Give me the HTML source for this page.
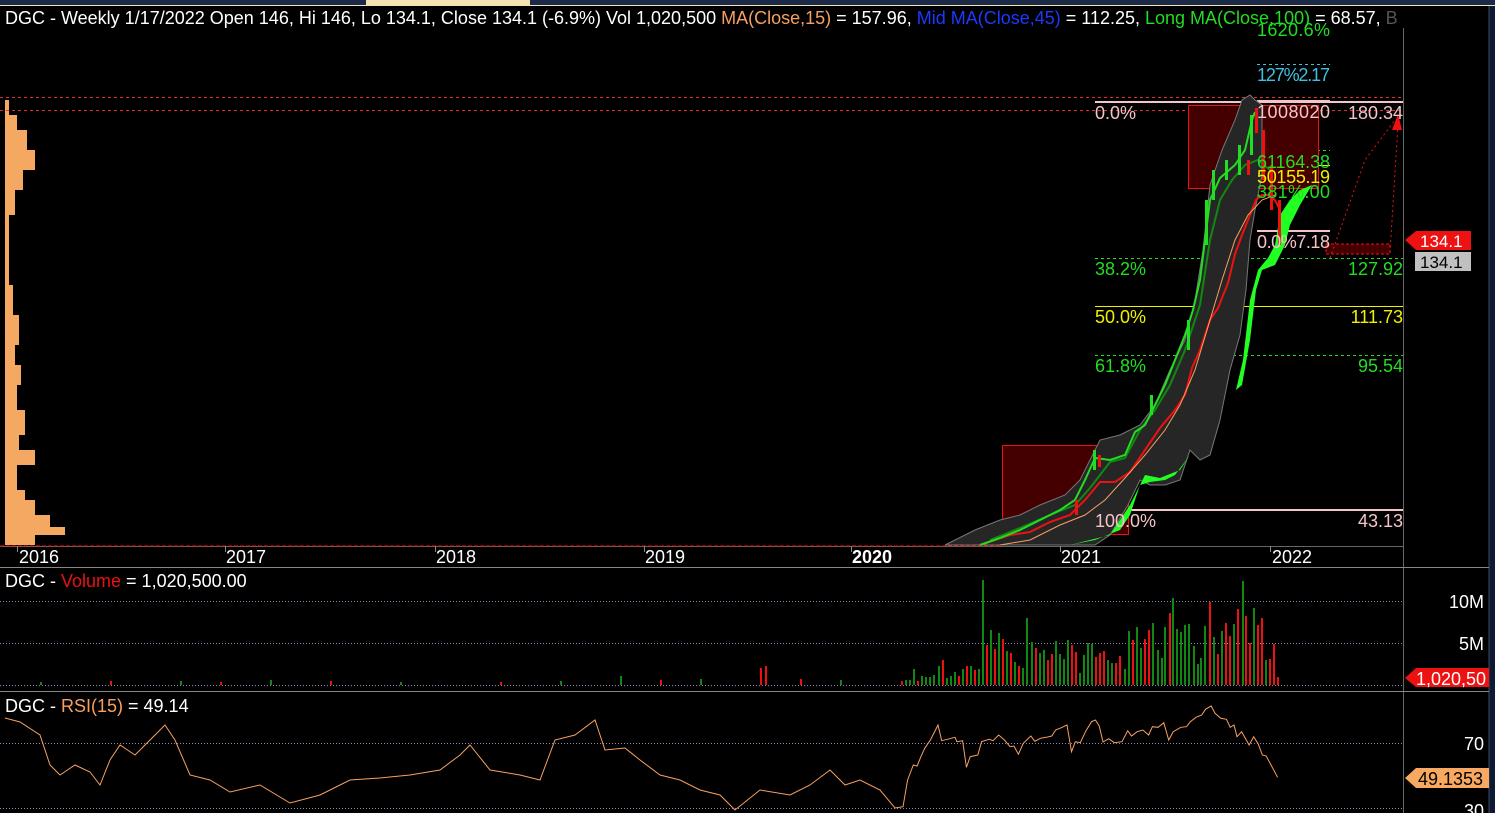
<!DOCTYPE html>
<html><head><meta charset="utf-8"><style>
html,body{margin:0;padding:0;background:#000;width:1495px;height:813px;overflow:hidden}
svg{display:block;font-family:"Liberation Sans",Arial,sans-serif}
</style></head><body>
<svg width="1495" height="813" viewBox="0 0 1495 813" xmlns="http://www.w3.org/2000/svg">
<rect width="1495" height="813" fill="#000"/>
<rect x="0" y="0" width="1495" height="5" fill="#1c2a4a"/>
<rect x="366" y="0" width="164" height="5" fill="#f4e3b0"/>
<rect x="0" y="5" width="1495" height="1" fill="#f4e3b0"/>
<rect x="1489" y="6" width="6" height="807" fill="#0e1a33"/>
<line x1="1489" y1="6" x2="1489" y2="813" stroke="#3a4a6a"/>
<line x1="1403.5" y1="28" x2="1403.5" y2="813" stroke="#666"/>
<line x1="0" y1="567.5" x2="1489" y2="567.5" stroke="#888"/>
<line x1="0" y1="691.5" x2="1489" y2="691.5" stroke="#888"/>
<line x1="0" y1="546.5" x2="1403" y2="546.5" stroke="#666"/>

<g fill="#f4a862">
<rect x="5" y="100" width="4" height="445"/>
<rect x="5" y="115" width="12" height="30"/><rect x="5" y="130" width="22" height="20"/><rect x="5" y="150" width="30" height="20"/><rect x="5" y="170" width="18" height="20"/><rect x="5" y="190" width="10" height="25"/>
<rect x="5" y="285" width="8" height="30"/><rect x="5" y="315" width="14" height="30"/><rect x="5" y="345" width="10" height="20"/><rect x="5" y="365" width="16" height="20"/><rect x="5" y="385" width="12" height="30"/><rect x="5" y="410" width="20" height="25"/><rect x="5" y="435" width="14" height="20"/><rect x="5" y="450" width="30" height="15"/><rect x="5" y="465" width="12" height="25"/><rect x="5" y="490" width="20" height="10"/><rect x="5" y="500" width="30" height="15"/><rect x="5" y="515" width="45" height="12"/><rect x="5" y="527" width="60" height="8"/><rect x="5" y="535" width="30" height="10"/>
</g>

<line x1="0" y1="97.5" x2="1403" y2="97.5" stroke="#e03030" stroke-dasharray="3,3"/>
<line x1="0" y1="110.5" x2="1403" y2="110.5" stroke="#e03030" stroke-dasharray="3,3"/>
<line x1="1095" y1="102" x2="1403" y2="102" stroke="#f4c4c8" stroke-width="2"/>
<line x1="1095" y1="258.5" x2="1403" y2="258.5" stroke="#22dd22" stroke-dasharray="3,3"/>
<line x1="1095" y1="306.5" x2="1403" y2="306.5" stroke="#f0f000"/>
<line x1="1095" y1="355.5" x2="1403" y2="355.5" stroke="#22dd22" stroke-dasharray="3,3"/>
<line x1="1095" y1="510" x2="1403" y2="510" stroke="#f4c4c8" stroke-width="2"/>
<line x1="1257" y1="64.5" x2="1330" y2="64.5" stroke="#40c0e0" stroke-dasharray="3,3"/>
<line x1="1257" y1="101" x2="1330" y2="101" stroke="#f4c4c8" stroke-width="2"/>
<line x1="1257" y1="150.5" x2="1330" y2="150.5" stroke="#22dd22" stroke-dasharray="3,3"/>
<line x1="1257" y1="165.5" x2="1330" y2="165.5" stroke="#f0f000"/>
<line x1="1257" y1="231" x2="1330" y2="231" stroke="#f4c4c8" stroke-width="2"/>

<rect x="1002.5" y="445.5" width="126" height="89" fill="#440000" stroke="#ee1111"/>
<rect x="1188.5" y="105.5" width="130" height="83" fill="#440000" stroke="#ee1111"/>
<rect x="1326" y="244" width="64" height="10" fill="#440000" stroke="#ee1111" stroke-dasharray="3,2"/>

<path d="M945,545 L975,530 L1000,520 L1020,515 L1040,505 L1065,495 L1080,480 L1100,440 L1120,435 L1140,425 L1155,405 L1170,370 L1185,340 L1195,300 L1203,250 L1210,185 L1222,150 L1235,120 L1242,100 L1250,95 L1255,100 L1262,105 L1262,175 L1255,210 L1250,240 L1246,290 L1240,335 L1230,370 L1220,420 L1210,455 L1200,460 L1190,450 L1180,480 L1165,485 L1150,485 L1140,480 L1128,505 L1110,535 L1095,545 Z" fill="#262626" stroke="#777" stroke-width="1"/>
<path d="M1070,545 L1095,540 L1120,530 L1130,515 L1140,485 L1150,482 L1165,480 L1175,475 L1190,455 L1180,470 L1160,478 L1145,475 L1130,505 L1110,535 Z" fill="#22ff22"/>
<path d="M1236,390 L1243,360 L1250,300 L1258,270 L1268,258 L1275,245 L1280,215 L1290,200 L1300,190 L1312,185 L1300,205 L1290,225 L1285,245 L1275,265 L1262,270 L1256,290 L1250,340 L1242,385 Z" fill="#22ff22"/>

<polyline fill="none" stroke="#ee1111" stroke-width="2" points="980,545 1010,535 1030,532 1050,522 1070,515 1085,500 1100,482 1115,482 1130,472 1145,450 1160,428 1175,410 1185,395 1192,368 1200,350 1210,320 1218,308 1228,283 1235,254 1242,235 1250,215 1256,200 1262,195 1268,195 1275,200 1280,210"/>
<polyline fill="none" stroke="#f8a060" stroke-width="1" points="1000,545 1030,540 1060,525 1085,515 1105,500 1125,478 1145,455 1165,430 1180,405 1195,370 1210,320 1222,280 1235,240 1248,215 1262,200 1275,195"/>
<polyline fill="none" stroke="#118811" stroke-width="2" points="990,540 1020,528 1050,515 1075,505 1090,488 1110,462 1125,458 1140,430 1155,410 1170,385 1185,350 1200,305 1210,240 1220,200 1232,180 1245,165 1258,160 1270,170"/>

<polyline fill="none" stroke="#22dd22" stroke-width="2" points="980,545 1000,538 1020,530 1040,520 1060,510 1075,500 1085,480 1095,458 1110,460 1125,455 1135,432 1145,425 1155,405 1165,385 1175,360 1185,335 1193,310 1200,280 1205,240 1210,200 1220,178 1235,165 1245,150 1252,120 1255,112"/>
<g fill="#22dd22"><rect x="1205" y="200" width="3" height="45"/><rect x="1212" y="170" width="3" height="30"/><rect x="1225" y="160" width="3" height="20"/><rect x="1238" y="145" width="3" height="30"/><rect x="1250" y="115" width="3" height="40"/><rect x="1187" y="320" width="3" height="30"/><rect x="1150" y="395" width="3" height="20"/><rect x="1093" y="450" width="3" height="20"/></g>
<g fill="#ee1111"><rect x="1255" y="108" width="3" height="25"/><rect x="1262" y="130" width="3" height="50"/><rect x="1270" y="165" width="3" height="45"/><rect x="1278" y="200" width="3" height="45"/><rect x="1247" y="160" width="3" height="15"/><rect x="1075" y="500" width="3" height="15"/><rect x="1098" y="455" width="3" height="12"/></g>
<polyline fill="none" stroke="#ee1111" stroke-dasharray="2,3" points="1390,252 1398,125"/>
<polygon points="1392,130 1398,114 1402,130" fill="#ee1111"/>
<polyline fill="none" stroke="#ee1111" stroke-dasharray="2,3" points="1330,258 1365,160 1395,120"/>
<line x1="0" y1="546" x2="1000" y2="546" stroke="#ee1111" stroke-dasharray="4,2"/>

<g font-size="18">
<text x="1095" y="119" fill="#f4c4c8">0.0%</text><text x="1403" y="119" fill="#f4c4c8" text-anchor="end">180.34</text>
<text x="1095" y="275" fill="#22dd22">38.2%</text><text x="1403" y="275" fill="#22dd22" text-anchor="end">127.92</text>
<text x="1095" y="323" fill="#f0f000">50.0%</text><text x="1403" y="323" fill="#f0f000" text-anchor="end">111.73</text>
<text x="1095" y="372" fill="#22dd22">61.8%</text><text x="1403" y="372" fill="#22dd22" text-anchor="end">95.54</text>
<text x="1095" y="527" fill="#f4c4c8">100.0%</text><text x="1403" y="527" fill="#f4c4c8" text-anchor="end">43.13</text>
<text x="1257" y="36" fill="#22dd22" textLength="73">1620.6%</text>
<text x="1257" y="81" fill="#40c0e0" textLength="73">127%2.17</text>
<text x="1257" y="118" fill="#f4c4c8" textLength="73">1008020</text>
<text x="1257" y="168" fill="#22dd22" textLength="73">61164.38</text>
<text x="1257" y="183" fill="#f0f000" textLength="73">50155.19</text>
<text x="1257" y="198" fill="#22dd22" textLength="73">381%.00</text>
<text x="1257" y="248" fill="#f4c4c8" textLength="73">0.0%7.18</text>
</g>

<polygon points="1405,240 1416,231 1471,231 1471,250 1416,250" fill="#ee1111"/>
<text x="1420" y="247" font-size="17" fill="#fff">134.1</text>
<rect x="1415" y="252" width="56" height="19" fill="#c0c0c0"/>
<text x="1420" y="268" font-size="17" fill="#000">134.1</text>

<g stroke="#888"><line x1="17.5" y1="546" x2="17.5" y2="552"/><line x1="225.5" y1="546" x2="225.5" y2="552"/><line x1="435.5" y1="546" x2="435.5" y2="552"/><line x1="644.5" y1="546" x2="644.5" y2="552"/><line x1="851.5" y1="546" x2="851.5" y2="552"/><line x1="1060.5" y1="546" x2="1060.5" y2="552"/><line x1="1270.5" y1="546" x2="1270.5" y2="552"/></g>
<g font-size="18" fill="#fff">
<text x="19" y="563">2016</text><text x="226" y="563">2017</text><text x="436" y="563">2018</text><text x="645" y="563">2019</text><text x="852" y="563" font-weight="bold">2020</text><text x="1061" y="563">2021</text><text x="1272" y="563">2022</text>
</g>

<text x="5" y="24" font-size="18" fill="#fff">DGC - Weekly 1/17/2022 Open 146, Hi 146, Lo 134.1, Close 134.1 (-6.9%) Vol 1,020,500 <tspan fill="#f8a060">MA(Close,15)</tspan> = 157.96, <tspan fill="#1a3aff">Mid MA(Close,45)</tspan> = 112.25, <tspan fill="#22dd22">Long MA(Close,100)</tspan> = 68.57, <tspan fill="#555">B</tspan></text>

<g stroke="#8888bb" stroke-dasharray="1,2"><line x1="0" y1="601.5" x2="1403" y2="601.5"/><line x1="0" y1="643.5" x2="1403" y2="643.5"/><line x1="0" y1="685.5" x2="1403" y2="685.5"/></g>
<text x="5" y="587" font-size="18" fill="#fff">DGC - <tspan fill="#ee1111">Volume</tspan> = 1,020,500.00</text>
<g font-size="18" fill="#fff" text-anchor="end"><text x="1484" y="608">10M</text><text x="1484" y="650">5M</text></g>
<g fill="#118811">
<rect x="905" y="680" width="2" height="5"/><rect x="909" y="680" width="2" height="5"/><rect x="913" y="669" width="2" height="16"/><rect x="921" y="676" width="2" height="9"/><rect x="925" y="677" width="2" height="8"/><rect x="929" y="677" width="2" height="8"/><rect x="933" y="675" width="2" height="10"/><rect x="938" y="666" width="2" height="19"/><rect x="946" y="678" width="2" height="7"/><rect x="950" y="676" width="2" height="9"/><rect x="954" y="672" width="2" height="13"/><rect x="962" y="669" width="2" height="16"/><rect x="970" y="666" width="2" height="19"/><rect x="978" y="669" width="2" height="16"/><rect x="982" y="580" width="2" height="105"/><rect x="990" y="630" width="2" height="55"/><rect x="998" y="633" width="2" height="52"/><rect x="1006" y="651" width="2" height="34"/><rect x="1014" y="662" width="2" height="23"/><rect x="1022" y="668" width="2" height="17"/><rect x="1026" y="618" width="2" height="67"/><rect x="1031" y="642" width="2" height="43"/><rect x="1039" y="653" width="2" height="32"/><rect x="1043" y="650" width="2" height="35"/><rect x="1055" y="641" width="2" height="44"/><rect x="1059" y="654" width="2" height="31"/><rect x="1063" y="659" width="2" height="26"/><rect x="1067" y="640" width="2" height="45"/><rect x="1079" y="673" width="2" height="12"/><rect x="1083" y="655" width="2" height="30"/><rect x="1087" y="643" width="2" height="42"/><rect x="1091" y="644" width="2" height="41"/><rect x="1107" y="660" width="2" height="25"/><rect x="1111" y="663" width="2" height="22"/><rect x="1124" y="669" width="2" height="16"/><rect x="1128" y="631" width="2" height="54"/><rect x="1136" y="627" width="2" height="58"/><rect x="1140" y="648" width="2" height="37"/><rect x="1152" y="623" width="2" height="62"/><rect x="1157" y="650" width="2" height="35"/><rect x="1161" y="658" width="2" height="27"/><rect x="1164" y="627" width="2" height="58"/><rect x="1172" y="598" width="2" height="87"/><rect x="1176" y="629" width="2" height="56"/><rect x="1180" y="632" width="2" height="53"/><rect x="1184" y="625" width="2" height="60"/><rect x="1188" y="624" width="2" height="61"/><rect x="1193" y="646" width="2" height="39"/><rect x="1197" y="664" width="2" height="21"/><rect x="1200" y="658" width="2" height="27"/><rect x="1204" y="626" width="2" height="59"/><rect x="1213" y="637" width="2" height="48"/><rect x="1221" y="631" width="2" height="54"/><rect x="1233" y="624" width="2" height="61"/><rect x="1242" y="581" width="2" height="104"/><rect x="1253" y="608" width="2" height="77"/><rect x="1265" y="660" width="2" height="25"/>
<rect x="40" y="682" width="2" height="3"/><rect x="180" y="681" width="2" height="4"/><rect x="270" y="680" width="2" height="5"/><rect x="400" y="682" width="2" height="3"/><rect x="560" y="681" width="2" height="4"/><rect x="620" y="676" width="2" height="9"/><rect x="700" y="679" width="2" height="6"/><rect x="840" y="680" width="2" height="5"/>
</g>
<g fill="#ee1111">
<rect x="901" y="681" width="2" height="4"/><rect x="917" y="681" width="2" height="4"/><rect x="942" y="660" width="2" height="25"/><rect x="958" y="676" width="2" height="9"/><rect x="966" y="666" width="2" height="19"/><rect x="974" y="670" width="2" height="15"/><rect x="986" y="645" width="2" height="40"/><rect x="994" y="649" width="2" height="36"/><rect x="1002" y="639" width="2" height="46"/><rect x="1010" y="653" width="2" height="32"/><rect x="1018" y="666" width="2" height="19"/><rect x="1035" y="648" width="2" height="37"/><rect x="1047" y="660" width="2" height="25"/><rect x="1051" y="654" width="2" height="31"/><rect x="1071" y="645" width="2" height="40"/><rect x="1075" y="652" width="2" height="33"/><rect x="1095" y="657" width="2" height="28"/><rect x="1099" y="653" width="2" height="32"/><rect x="1103" y="651" width="2" height="34"/><rect x="1115" y="663" width="2" height="22"/><rect x="1119" y="656" width="2" height="29"/><rect x="1132" y="640" width="2" height="45"/><rect x="1144" y="639" width="2" height="46"/><rect x="1148" y="630" width="2" height="55"/><rect x="1169" y="613" width="2" height="72"/><rect x="1209" y="602" width="2" height="83"/><rect x="1217" y="654" width="2" height="31"/><rect x="1225" y="623" width="2" height="62"/><rect x="1229" y="636" width="2" height="49"/><rect x="1237" y="609" width="2" height="76"/><rect x="1245" y="616" width="2" height="69"/><rect x="1249" y="643" width="2" height="42"/><rect x="1257" y="625" width="2" height="60"/><rect x="1261" y="618" width="2" height="67"/><rect x="1269" y="659" width="2" height="26"/><rect x="1273" y="644" width="2" height="41"/><rect x="1277" y="677" width="2" height="8"/>
<rect x="110" y="681" width="2" height="4"/><rect x="220" y="682" width="2" height="3"/><rect x="330" y="681" width="2" height="4"/><rect x="500" y="682" width="2" height="3"/><rect x="660" y="680" width="2" height="5"/><rect x="760" y="668" width="2" height="17"/><rect x="765" y="666" width="2" height="19"/><rect x="800" y="679" width="2" height="6"/>
</g>
<polygon points="1405,678 1416,668 1489,668 1489,687 1416,687" fill="#ee1111"/>
<text x="1416" y="685" font-size="18" fill="#fff">1,020,50</text>

<g stroke="#8888bb" stroke-dasharray="1,2"><line x1="0" y1="743.5" x2="1403" y2="743.5"/><line x1="0" y1="808.5" x2="1403" y2="808.5"/></g>
<text x="5" y="712" font-size="18" fill="#fff">DGC - <tspan fill="#f8a060">RSI(15)</tspan> = 49.14</text>
<g font-size="18" fill="#fff" text-anchor="end"><text x="1484" y="750">70</text><text x="1484" y="817">30</text></g>
<polyline fill="none" stroke="#f8a060" stroke-width="1" points="5,718 20,722 40,735 50,765 60,775 75,765 90,772 100,785 110,760 120,745 135,755 150,740 165,725 175,740 190,775 210,780 230,792 260,785 290,803 320,795 350,780 380,778 410,775 440,770 460,755 470,745 490,770 520,775 540,780 555,740 575,735 595,720 605,750 625,748 640,760 660,775 680,780 700,790 720,795 735,810 760,790 790,795 810,785 830,770 845,785 860,780 880,790 895,808 903,806.7 907.6,780 913.3,765 917.1,766 920.9,756.7 924.7,748.3 930.4,740 938,725 941.7,740.7 947.4,739.3 955,737.3 956.9,741.7 962.6,740.7 966.4,767.3 970.2,756.7 977.8,755 981.6,741.7 989.2,739.3 993,740.7 998.7,735 1004.4,740 1010.1,746.7 1013.9,746 1018.4,754.3 1023.3,743.3 1030.9,736 1034.7,741.3 1040.4,738.3 1046.1,737.3 1051.8,736 1055.6,730 1061.3,727.7 1067,725 1071.5,751.7 1075.3,741.7 1080.3,742.7 1086,730.7 1091.6,721.7 1095.4,720 1099.2,726 1103,742 1108.7,738.7 1114.4,742.7 1122,741.7 1127.7,730.7 1131.5,736 1137.2,731.7 1142.9,730 1148.6,735 1152.4,726.7 1158.1,727.3 1163.8,722.7 1168.7,740 1173.2,731.7 1180.8,727.3 1186.5,726.7 1190.3,721.7 1196,717.3 1201.7,715 1205.5,709.3 1211.2,706 1215,713.3 1220.7,718.3 1226.4,719.3 1230.2,727.3 1234,725 1237,736.7 1241.6,731.7 1249.1,745 1253.7,736.7 1258.2,744 1262.4,755 1266.2,756 1277.6,777.3"/>
<polygon points="1405,778 1416,768 1489,768 1489,788 1416,788" fill="#f8a860"/>
<text x="1418" y="785" font-size="18" fill="#000">49.1353</text>
</svg>
</body></html>
